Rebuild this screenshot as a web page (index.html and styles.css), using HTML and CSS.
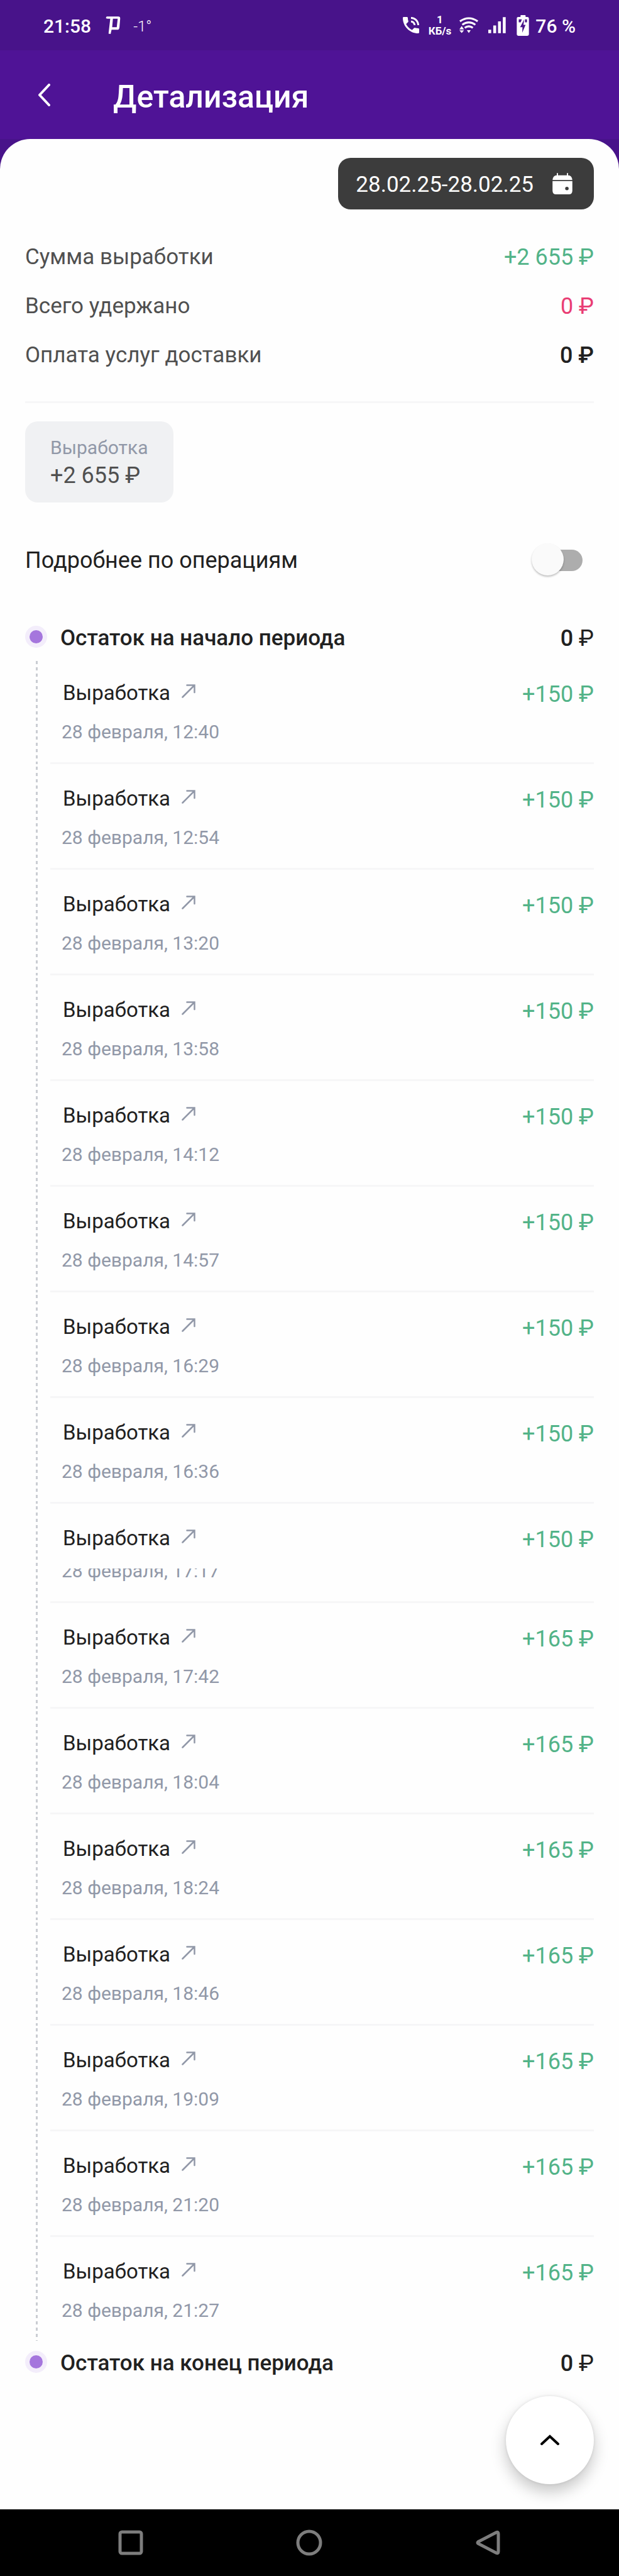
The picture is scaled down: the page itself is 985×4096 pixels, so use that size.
FILE: index.html
```html
<!DOCTYPE html>
<html lang="ru">
<head>
    <meta charset="UTF-8" />
    <meta name="viewport" content="width=device-width, initial-scale=1" />
    <title>Детализация</title>
    <link rel="stylesheet" href="styles.css">
</head>
<body>
    <svg class="sprite" aria-hidden="true">
        <symbol id="arrow" viewBox="0 0 22 22">
            <path d="M1.5 20.5L20 2M8.5 1.5h12V13" fill="none" stroke="currentColor" stroke-width="2.5" stroke-linecap="round" />
        </symbol>
    </svg>

    <!-- System status bar -->
    <div class="status-bar">
        <span class="clock">21:58</span>
        <svg class="icon-app" viewBox="0 0 76 92" aria-hidden="true">
            <path d="M0 9L4 1H65Q76 1 75 12L71 58Q70 70 60 70H30L25 92L14 90L23 12H10Q4 12 0 9ZM37 12L33 57H57L62 12Z" fill="#fff" fill-rule="evenodd" />
        </svg>
        <span class="temp">-1°</span>

        <div class="status-right">
            <svg class="icon-call" viewBox="3 3 18 18" aria-hidden="true">
                <path fill="#fff" d="M20 15.5c-1.25 0-2.45-.2-3.57-.57-.35-.11-.74-.03-1.02.24l-2.2 2.2c-2.83-1.44-5.15-3.75-6.59-6.59l2.2-2.21c.28-.26.36-.65.25-1C8.7 6.45 8.5 5.25 8.5 4c0-.55-.45-1-1-1H4c-.55 0-1 .45-1 1 0 9.39 7.61 17 17 17 .55 0 1-.45 1-1v-3.5c0-.55-.45-1-1-1zM19 12h2c0-4.97-4.03-9-9-9v2c3.87 0 7 3.13 7 7zm-4 0h2c0-2.76-2.24-5-5-5v2c1.66 0 3 1.34 3 3z" />
            </svg>
            <span class="speed"><span>1</span><span>КБ/s</span></span>
            <svg class="icon-wifi" viewBox="0 0 98 84" aria-hidden="true">
                <path d="M3 22Q49-10 95 22M15 40Q49 15 83 40M28 56Q49 40 70 56" fill="none" stroke="#fff" stroke-width="10" />
                <path d="M39 68H59L49 83ZM0 64L12 47L24 64ZM0 69H24L12 83Z" fill="#fff" />
            </svg>
            <svg class="icon-signal" viewBox="0 0 92 84" aria-hidden="true">
                <path d="M0 66h15v18H0zM26 44h15v40H26zM51 22h15v62H51zM76 0h15v84H76z" fill="#fff" />
            </svg>
            <svg class="icon-battery" viewBox="0 0 62 106" aria-hidden="true">
                <rect y="10" width="62" height="96" rx="8" fill="#fff" />
                <rect x="19" width="26" height="14" rx="3" fill="#fff" />
                <path d="M10 22H26L20 37H10ZM42 22H52V37H42ZM38 22L34 50H45L28 90L29 62H17Z" fill="#48138a" />
            </svg>
            <span class="percent">76 %</span>
        </div>
    </div>

    <header class="header">
        <a href="#" class="back" aria-label="Назад">
            <svg viewBox="0 0 20 36" aria-hidden="true">
                <path d="M18 2L3 18L18 34" fill="none" stroke="#fff" stroke-width="4" stroke-linecap="round" stroke-linejoin="round" />
            </svg>
        </a>
        <h1>Детализация</h1>
    </header>

    <div class="backdrop">
        <main class="sheet">
            <button type="button" class="period-btn">
                28.02.25-28.02.25
                <svg viewBox="0 0 102 110" aria-hidden="true">
                    <path d="M22 12V2Q22 0 25 0T28 2V12H74V2Q74 0 77 0T80 2V12Q100 13 102 36H0Q2 13 22 12ZM0 42H102V92Q101 110 84 110H18Q1 110 0 92ZM74 71A9 9 0 1 0 74 89A9 9 0 1 0 74 71Z" fill="#fff" fill-rule="evenodd" />
                </svg>
            </button>

            <dl class="summary">
                <div class="summary-row">
                    <dt>Сумма выработки</dt>
                    <dd class="plus">+2 655 ₽</dd>
                </div>
                <div class="summary-row">
                    <dt>Всего удержано</dt>
                    <dd class="minus">0 ₽</dd>
                </div>
                <div class="summary-row">
                    <dt>Оплата услуг доставки</dt>
                    <dd class="total">0 ₽</dd>
                </div>
            </dl>

            <div class="chip">
                <span class="chip-label">Выработка</span>
                <span class="chip-value">+2 655 ₽</span>
            </div>

            <div class="details">
                <label for="details">Подробнее по операциям</label>
                <input type="checkbox" id="details" class="switch" />
            </div>

            <div class="balance">
                <span class="dot"></span>
                <h2>Остаток на начало периода</h2>
                <span class="balance-sum">0 <span class="currency">₽</span></span>
            </div>

            <ul class="operations">
                <li>
                    <div class="operation">
                        <a href="#">Выработка <svg><use href="#arrow" /></svg></a>
                        <span class="amount">+150 ₽</span>
                        <time>28 февраля, 12:40</time>
                    </div>
                </li>
                <li>
                    <div class="operation">
                        <a href="#">Выработка <svg><use href="#arrow" /></svg></a>
                        <span class="amount">+150 ₽</span>
                        <time>28 февраля, 12:54</time>
                    </div>
                </li>
                <li>
                    <div class="operation">
                        <a href="#">Выработка <svg><use href="#arrow" /></svg></a>
                        <span class="amount">+150 ₽</span>
                        <time>28 февраля, 13:20</time>
                    </div>
                </li>
                <li>
                    <div class="operation">
                        <a href="#">Выработка <svg><use href="#arrow" /></svg></a>
                        <span class="amount">+150 ₽</span>
                        <time>28 февраля, 13:58</time>
                    </div>
                </li>
                <li>
                    <div class="operation">
                        <a href="#">Выработка <svg><use href="#arrow" /></svg></a>
                        <span class="amount">+150 ₽</span>
                        <time>28 февраля, 14:12</time>
                    </div>
                </li>
                <li>
                    <div class="operation">
                        <a href="#">Выработка <svg><use href="#arrow" /></svg></a>
                        <span class="amount">+150 ₽</span>
                        <time>28 февраля, 14:57</time>
                    </div>
                </li>
                <li>
                    <div class="operation">
                        <a href="#">Выработка <svg><use href="#arrow" /></svg></a>
                        <span class="amount">+150 ₽</span>
                        <time>28 февраля, 16:29</time>
                    </div>
                </li>
                <li>
                    <div class="operation">
                        <a href="#">Выработка <svg><use href="#arrow" /></svg></a>
                        <span class="amount">+150 ₽</span>
                        <time>28 февраля, 16:36</time>
                    </div>
                </li>
                <li>
                    <div class="operation">
                        <a href="#">Выработка <svg><use href="#arrow" /></svg></a>
                        <span class="amount">+150 ₽</span>
                        <time class="cut">28 февраля, 17:17</time>
                    </div>
                </li>
                <li>
                    <div class="operation">
                        <a href="#">Выработка <svg><use href="#arrow" /></svg></a>
                        <span class="amount">+165 ₽</span>
                        <time>28 февраля, 17:42</time>
                    </div>
                </li>
                <li>
                    <div class="operation">
                        <a href="#">Выработка <svg><use href="#arrow" /></svg></a>
                        <span class="amount">+165 ₽</span>
                        <time>28 февраля, 18:04</time>
                    </div>
                </li>
                <li>
                    <div class="operation">
                        <a href="#">Выработка <svg><use href="#arrow" /></svg></a>
                        <span class="amount">+165 ₽</span>
                        <time>28 февраля, 18:24</time>
                    </div>
                </li>
                <li>
                    <div class="operation">
                        <a href="#">Выработка <svg><use href="#arrow" /></svg></a>
                        <span class="amount">+165 ₽</span>
                        <time>28 февраля, 18:46</time>
                    </div>
                </li>
                <li>
                    <div class="operation">
                        <a href="#">Выработка <svg><use href="#arrow" /></svg></a>
                        <span class="amount">+165 ₽</span>
                        <time>28 февраля, 19:09</time>
                    </div>
                </li>
                <li>
                    <div class="operation">
                        <a href="#">Выработка <svg><use href="#arrow" /></svg></a>
                        <span class="amount">+165 ₽</span>
                        <time>28 февраля, 21:20</time>
                    </div>
                </li>
                <li>
                    <div class="operation">
                        <a href="#">Выработка <svg><use href="#arrow" /></svg></a>
                        <span class="amount">+165 ₽</span>
                        <time>28 февраля, 21:27</time>
                    </div>
                </li>
            </ul>

            <div class="balance">
                <span class="dot"></span>
                <h2>Остаток на конец периода</h2>
                <span class="balance-sum">0 <span class="currency">₽</span></span>
            </div>

            <button type="button" class="to-top" aria-label="Наверх">
                <svg viewBox="0 0 30 18" aria-hidden="true">
                    <path d="M2 15L15 3L28 15" fill="none" stroke="#000" stroke-width="4" stroke-linecap="round" />
                </svg>
            </button>
        </main>
    </div>

    <!-- System navigation buttons -->
    <nav class="system-nav">
        <button type="button" aria-label="Недавние">
            <svg viewBox="0 0 42 42" aria-hidden="true"><rect x="4" y="4" width="34" height="34" rx="3" /></svg>
        </button>
        <button type="button" aria-label="Домой">
            <svg viewBox="0 0 42 42" aria-hidden="true"><circle cx="21" cy="21" r="18" /></svg>
        </button>
        <button type="button" aria-label="Назад">
            <svg viewBox="0 0 42 42" aria-hidden="true"><path d="M5 19.5L34 4.5Q37 3.5 37 7V35Q37 38.5 34 37.5L5 22.5Q3 21 5 19.5Z" /></svg>
        </button>
    </nav>
</body>
</html>
```
FILE: styles.css
```css
* {
    margin: 0;
    padding: 0;
    box-sizing: border-box;
}

body {
    font-family: Roboto, "Noto Sans", sans-serif;
    font-size: 36px;
    line-height: 40px;
    color: #212121;
    background: #fefefe;
    min-height: 100vh;
    display: flex;
    flex-direction: column;
}

svg {
    display: block;
    flex: none;
}

button {
    font: inherit;
    border: none;
    cursor: pointer;
}

.sprite {
    position: absolute;
    width: 0;
    height: 0;
}

/* Status bar */
.status-bar {
    display: flex;
    align-items: center;
    height: 80px;
    padding: 0 69px;
    background: #48138a;
    color: #fff;
    font-size: 30px;
    font-weight: 500;
}

.clock,
.percent {
    padding-top: 4px;
}

.icon-app {
    width: 24px;
    height: 28px;
    margin-left: 23px;
}

.temp {
    margin-left: 20px;
    padding-top: 3px;
    font-size: 24px;
    font-weight: 300;
}

.status-right {
    display: flex;
    align-items: center;
    margin-left: auto;
}

.icon-call {
    width: 26px;
    height: 26px;
}

.speed {
    display: flex;
    flex-direction: column;
    align-items: center;
    margin: 0 13px 0 15px;
    font-size: 17px;
    font-weight: 700;
    line-height: 18px;
}

.icon-wifi {
    width: 30px;
    height: 26px;
}

.icon-signal {
    width: 28px;
    height: 26px;
    margin: 0 17px 0 16px;
}

.icon-battery {
    width: 20px;
    height: 33px;
    margin-right: 10px;
}

/* Header */
.header {
    display: flex;
    align-items: center;
    min-height: 141px;
    padding: 0 40px;
    background: #4f1396;
    color: #fff;
}

.back {
    width: 140px;
    padding-left: 20px;
}

.back svg {
    width: 20px;
    height: 36px;
}

.header h1 {
    padding-top: 6px;
    font-size: 50px;
    line-height: 60px;
    font-weight: 500;
}

/* White sheet with rounded top */
.backdrop {
    flex: 1;
    display: flex;
    background: linear-gradient(#48138a 60px, #fefefe 60px);
}

.sheet {
    position: relative;
    flex: 1;
    padding: 30px 40px 120px;
    background: #fefefe;
    border-radius: 48px 48px 0 0;
}

.period-btn {
    display: flex;
    align-items: center;
    gap: 30px;
    height: 82px;
    margin-left: auto;
    padding: 4px 34px 0 28px;
    border-radius: 20px;
    background: #3c3c3c;
    color: #fff;
    font-size: 35px;
}

.period-btn svg {
    width: 32px;
    height: 34px;
    margin-bottom: 4px;
}

.summary {
    display: flex;
    flex-direction: column;
    gap: 38px;
    margin-top: 56px;
    padding-bottom: 53px;
    border-bottom: 3px solid #f6f6f7;
}

.summary-row {
    display: flex;
    justify-content: space-between;
    color: #505050;
}

.summary dt {
    font-size: 35px;
}

.summary .plus {
    color: #52b388;
}

.summary .minus {
    color: #e93d74;
}

.summary .total {
    color: #212121;
    font-weight: 500;
}

.chip {
    display: flex;
    flex-direction: column;
    gap: 4px;
    width: fit-content;
    margin-top: 29px;
    padding: 24px 40px 21px;
    border-radius: 20px;
    background: #f0f1f3;
}

.chip-label {
    font-size: 30px;
    line-height: 36px;
    color: #9198a8;
}

.chip-value {
    line-height: 44px;
    color: #505050;
}

.details {
    display: flex;
    align-items: center;
    justify-content: space-between;
    margin: 72px 0 84px;
}

.switch {
    position: relative;
    appearance: none;
    width: 77px;
    height: 34px;
    margin-right: 18px;
    border-radius: 17px;
    background: #adadad;
    cursor: pointer;
}

.switch::before {
    content: "";
    position: absolute;
    top: -10px;
    left: -4px;
    width: 51px;
    height: 51px;
    border-radius: 50%;
    background: #fafafa;
    box-shadow: 0 2px 3px rgba(0, 0, 0, 0.25);
}

.switch:checked::before {
    left: 30px;
}

/* Opening and closing balance */
.balance {
    display: flex;
    align-items: flex-start;
}

.balance h2 {
    margin-left: 21px;
    font-size: 35px;
    font-weight: 500;
}

.dot {
    width: 35px;
    height: 35px;
    border: 7px solid #f3edfb;
    border-radius: 50%;
    background: #a576dd;
}

.balance-sum {
    margin-left: auto;
    font-weight: 500;
}

.currency {
    font-weight: 400;
}

/* Operations, the dashed rail is the row background */
.operations {
    list-style: none;
    margin: 12px 0 16px;
}

.operations li {
    padding-left: 40px;
    background: repeating-linear-gradient(#cacdd3 0 5px, transparent 5px 10px) 17px 4px / 3px 100% no-repeat;
}

.operation {
    display: grid;
    grid-template-columns: 1fr auto;
    padding: 35px 0 28px 18px;
    border-bottom: 3px solid #f6f6f7;
}

.operations li:last-child .operation {
    border-bottom: none;
}

.operation a {
    display: flex;
    align-items: flex-start;
    gap: 18px;
    height: 40px;
    padding-left: 2px;
    font-size: 33px;
    color: #212121;
    text-decoration: none;
}

.operation a svg {
    width: 22px;
    height: 22px;
    margin-top: 6px;
    color: #9198a8;
}

.operation .amount {
    height: 40px;
    line-height: 44px;
    color: #52b388;
}

.operation time {
    margin-top: 22px;
    font-size: 30px;
    color: #9198a8;
}

.operation .cut {
    display: flex;
    align-items: flex-end;
    height: 24px;
    margin-top: 28px;
    overflow: hidden;
}

.to-top {
    position: absolute;
    right: 40px;
    bottom: 40px;
    display: flex;
    align-items: center;
    justify-content: center;
    width: 140px;
    height: 140px;
    border-radius: 50%;
    background: #fff;
    box-shadow: 0 12px 24px rgba(0, 0, 0, 0.22), 0 0 4px rgba(0, 0, 0, 0.1);
}

.to-top svg {
    width: 30px;
    height: 18px;
}

/* System navigation */
.system-nav {
    display: grid;
    grid-template-columns: repeat(3, 1fr);
    place-items: center;
    height: 106px;
    padding: 0 66px;
    background: #000;
}

.system-nav button {
    background: none;
}

.system-nav svg {
    width: 42px;
    height: 42px;
    fill: none;
    stroke: #7d7d7d;
    stroke-width: 5;
}
```
